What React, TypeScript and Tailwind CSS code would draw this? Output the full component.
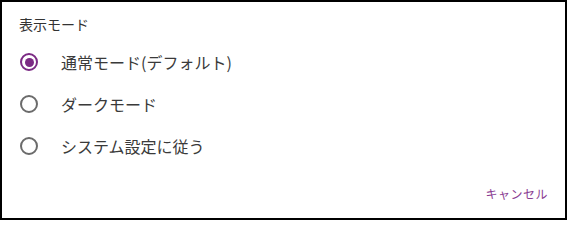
import { useState } from "react";

const options = ["通常モード(デフォルト)", "ダークモード", "システム設定に従う"];

function Radio({ checked }: { checked: boolean }) {
	return (
		<span
			className={
				checked
					? "flex size-[18px] shrink-0 items-center justify-center rounded-full border-2 border-[#7b2a84]"
					: "flex size-[18px] shrink-0 items-center justify-center rounded-full border-2 border-[#6b6b6b]"
			}
		>
			{checked ? <span className="size-[9px] rounded-full bg-[#7b2a84]" /> : null}
		</span>
	);
}

export default function App() {
	const [selected, setSelected] = useState(0);
	return (
		<div
			className="box-border flex h-[220px] w-[567px] flex-col border-2 border-black bg-white pl-[17px] pr-[17px] pt-[12px]"
			style={{ fontFamily: '"Noto Sans CJK JP", "Noto Sans", sans-serif' }}
		>
			<div className="text-[14px] leading-5 text-[#333333]">表示モード</div>
			<div className="mt-[7px] flex flex-col">
				{options.map((label, i) => (
					<button
						key={label}
						type="button"
						className="flex h-[42px] items-center gap-[23px] pl-[1px] text-left"
						onClick={() => setSelected(i)}
					>
						<Radio checked={selected === i} />
						<span className="text-[16px] leading-6 text-[#3a3a3a]">{label}</span>
					</button>
				))}
			</div>
			<div className="mt-[17px] flex justify-end">
				<button type="button" className="text-[12px] leading-5 tracking-[0.5px] text-[#8a3c92]">
					キャンセル
				</button>
			</div>
		</div>
	);
}
